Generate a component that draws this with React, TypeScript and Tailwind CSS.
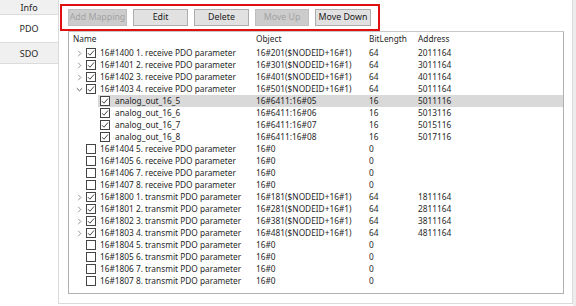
import React from "react";

type Node = {
  name: string;
  obj: string;
  bits: string;
  addr?: string;
  checked: boolean;
  chevron?: "right" | "down";
  child?: boolean;
  selected?: boolean;
};

const rows: Node[] = [
  { name: "16#1400 1. receive PDO parameter", obj: "16#201($NODEID+16#1)", bits: "64", addr: "2011164", checked: true, chevron: "right" },
  { name: "16#1401 2. receive PDO parameter", obj: "16#301($NODEID+16#1)", bits: "64", addr: "3011164", checked: true, chevron: "right" },
  { name: "16#1402 3. receive PDO parameter", obj: "16#401($NODEID+16#1)", bits: "64", addr: "4011164", checked: true, chevron: "right" },
  { name: "16#1403 4. receive PDO parameter", obj: "16#501($NODEID+16#1)", bits: "64", addr: "5011164", checked: true, chevron: "down" },
  { name: "analog_out_16_5", obj: "16#6411:16#05", bits: "16", addr: "5011116", checked: true, child: true, selected: true },
  { name: "analog_out_16_6", obj: "16#6411:16#06", bits: "16", addr: "5013116", checked: true, child: true },
  { name: "analog_out_16_7", obj: "16#6411:16#07", bits: "16", addr: "5015116", checked: true, child: true },
  { name: "analog_out_16_8", obj: "16#6411:16#08", bits: "16", addr: "5017116", checked: true, child: true },
  { name: "16#1404 5. receive PDO parameter", obj: "16#0", bits: "0", checked: false },
  { name: "16#1405 6. receive PDO parameter", obj: "16#0", bits: "0", checked: false },
  { name: "16#1406 7. receive PDO parameter", obj: "16#0", bits: "0", checked: false },
  { name: "16#1407 8. receive PDO parameter", obj: "16#0", bits: "0", checked: false },
  { name: "16#1800 1. transmit PDO parameter", obj: "16#181($NODEID+16#1)", bits: "64", addr: "1811164", checked: true, chevron: "right" },
  { name: "16#1801 2. transmit PDO parameter", obj: "16#281($NODEID+16#1)", bits: "64", addr: "2811164", checked: true, chevron: "right" },
  { name: "16#1802 3. transmit PDO parameter", obj: "16#381($NODEID+16#1)", bits: "64", addr: "3811164", checked: true, chevron: "right" },
  { name: "16#1803 4. transmit PDO parameter", obj: "16#481($NODEID+16#1)", bits: "64", addr: "4811164", checked: true, chevron: "right" },
  { name: "16#1804 5. transmit PDO parameter", obj: "16#0", bits: "0", checked: false },
  { name: "16#1805 6. transmit PDO parameter", obj: "16#0", bits: "0", checked: false },
  { name: "16#1806 7. transmit PDO parameter", obj: "16#0", bits: "0", checked: false },
  { name: "16#1807 8. transmit PDO parameter", obj: "16#0", bits: "0", checked: false },
];

function Check({ checked }: { checked: boolean }) {
  return (
    <div className="w-[10px] h-[10px] border border-[#444] bg-white flex items-center justify-center shrink-0">
      {checked && (
        <svg width="8" height="8" viewBox="0 0 8 8">
          <path d="M1 4.2 L3 6.2 L7 1.5" fill="none" stroke="#333" strokeWidth="0.9" />
        </svg>
      )}
    </div>
  );
}

function Chevron({ dir }: { dir?: "right" | "down" }) {
  if (!dir) return <div className="w-[8px] shrink-0" />;
  return (
    <div className="w-[8px] flex items-center justify-center shrink-0">
      <svg width="7" height="7" viewBox="0 0 7 7">
        {dir === "right" ? (
          <path d="M2.2 0.8 L4.8 3.5 L2.2 6.2" fill="none" stroke="#8a8a8a" strokeWidth="0.9" />
        ) : (
          <path d="M0.8 2.2 L3.5 4.8 L6.2 2.2" fill="none" stroke="#555" strokeWidth="0.9" />
        )}
      </svg>
    </div>
  );
}

function Row({ r }: { r: Node }) {
  const indent = r.child ? 29 : 6;
  return (
    <div className="flex h-[12px]">
      <div className="shrink-0" style={{ width: indent }} />
      <div className={"flex-1 flex items-center " + (r.selected ? "bg-[#d9d9d9]" : "")}>
        <div className="flex items-center shrink-0" style={{ width: 187 - indent }}>
          {r.child ? (
            <>
              <div className="w-[2px]" />
              <Check checked={r.checked} />
              <span className="ml-[5px] whitespace-nowrap">{r.name}</span>
            </>
          ) : (
            <>
              <Chevron dir={r.chevron} />
              <div className="w-[3px]" />
              <Check checked={r.checked} />
              <span className="ml-[4px] whitespace-nowrap">{r.name}</span>
            </>
          )}
        </div>
        <div className="w-[113px] shrink-0 whitespace-nowrap">{r.obj}</div>
        <div className="w-[49px] shrink-0">{r.bits}</div>
        <div className="flex-1">{r.addr ?? ""}</div>
      </div>
    </div>
  );
}

function Btn({ label, w, disabled }: { label: string; w: string; disabled?: boolean }) {
  return (
    <div
      className={
        "h-[17px] flex items-center justify-center border text-[8.8px] " +
        w +
        (disabled
          ? " bg-[#cccccc] border-[#bfbfbf] text-[#a3a3a3]"
          : " bg-[#e1e1e1] border-[#adadad] text-[#1a1a1a]")
      }
    >
      {label}
    </div>
  );
}

export default function App() {
  return (
    <div
      className="w-[576px] h-[306px] bg-white flex text-[8.3px] leading-none text-[#1f1f1f] overflow-hidden"
      style={{ fontFamily: '"Noto Sans", "Open Sans", sans-serif' }}
    >
      {/* tabs */}
      <div className="w-[58px] shrink-0 flex flex-col text-[9px]">
        <div className="h-[15px] bg-[#f0f0f0] border-b border-[#dcdcdc] flex items-center justify-center">Info</div>
        <div className="h-[27px] bg-white flex items-center justify-center">PDO</div>
        <div className="h-[22px] bg-[#f0f0f0] border-t border-b border-[#dcdcdc] flex items-center justify-center">SDO</div>
      </div>

      {/* panel */}
      <div className="w-[515px] h-[304px] border-l border-r border-b border-[#dadada] pt-[4px]">
        <div className="ml-[1px] w-[320px] h-[27px] border-2 border-[#e01010] flex items-center gap-[6px] pl-[6px]">
          <Btn label="Add Mapping" w="w-[59px]" disabled />
          <Btn label="Edit" w="w-[55px]" />
          <Btn label="Delete" w="w-[55px]" />
          <Btn label="Move Up" w="w-[54px]" disabled />
          <Btn label="Move Down" w="w-[56px]" />
        </div>
        <div className="ml-[9px] w-[496px] h-[263px] border border-[#b0b0b0] border-t-[#c8c8c8] bg-white">
          <div className="flex items-center h-[15px]">
            <div className="w-[187px] pl-[4px]">Name</div>
            <div className="w-[113px]">Object</div>
            <div className="w-[49px]">BitLength</div>
            <div>Address</div>
          </div>
          {rows.map((r, i) => (
            <Row key={i} r={r} />
          ))}
        </div>
      </div>
      <div className="flex-1 bg-[#ececec]" />
    </div>
  );
}
